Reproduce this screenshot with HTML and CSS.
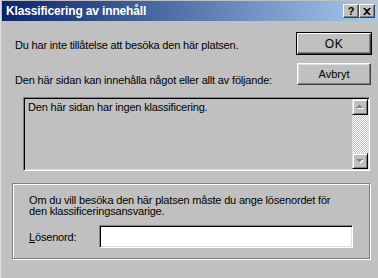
FILE: index.html
```html
<!DOCTYPE html>
<html>
<head>
<meta charset="utf-8">
<title>Klassificering av innehåll</title>
<link rel="stylesheet" href="styles.css">
</head>
<body>
<div class="window">
  <div class="titlebar">
    <span class="title">Klassificering av innehåll</span>
    <div class="caption-buttons">
      <span class="cbtn help">?</span>
      <span class="cbtn close">
        <svg width="8" height="7" viewBox="0 0 8 7"><path d="M0 0h2l2 2 2-2h2L5 3.5 8 7H6L4 5 2 7H0l3-3.5z" fill="#000"/></svg>
      </span>
    </div>
  </div>

  <div class="content">
    <div class="top">
      <div class="messages">
        <p class="msg first">Du har inte tillåtelse att besöka den här platsen.</p>
        <p class="msg second">Den här sidan kan innehålla något eller allt av följande:</p>
      </div>
      <div class="buttons">
        <button class="btn default">OK</button>
        <button class="btn">Avbryt</button>
      </div>
    </div>

    <div class="listbox">
      <div class="list-text">Den här sidan har ingen klassificering.</div>
      <div class="scrollbar">
        <span class="sbtn">
          <svg width="14" height="14" viewBox="0 0 14 14"><path d="M4 9h7L7.5 5.5z" fill="#fff"/><path d="M3 8h7L6.5 4.5z" fill="#808080"/></svg>
        </span>
        <span class="track"></span>
        <span class="sbtn">
          <svg width="14" height="14" viewBox="0 0 14 14"><path d="M4 6h7L7.5 9.5z" fill="#fff"/><path d="M3 5h7L6.5 8.5z" fill="#808080"/></svg>
        </span>
      </div>
    </div>

    <div class="group">
      <p class="group-text">Om du vill besöka den här platsen måste du ange lösenordet för<br>den klassificeringsansvarige.</p>
      <div class="pw-row">
        <label class="pw-label"><u>L</u>ösenord:</label>
        <div class="field"></div>
      </div>
    </div>
  </div>
</div>
</body>
</html>
```

FILE: styles.css
```css
body {
	margin: 0;
	background-color: #c0c0c0;
	font-family: "Liberation Sans", Arial, sans-serif;
	font-size: 11px;
	letter-spacing: -0.18px;
	color: #000;
}

.window {
	width: 378px;
	height: 278px;
	padding: 1px 0 0 1px;
	box-sizing: border-box;
	background-color: #c0c0c0;
	border-left: 1px solid #dfdfdf;
}

.titlebar {
	height: 20px;
	display: flex;
	align-items: center;
	padding-left: 4px;
	padding-right: 3px;
	background: linear-gradient(to right, #0a246a, #a6caf0);
}

.title {
	flex: 1;
	color: #fff;
	font-weight: bold;
	font-size: 12px;
	letter-spacing: -0.15px;
}

.caption-buttons {
	display: flex;
}

.cbtn {
	width: 16px;
	height: 14px;
	box-sizing: border-box;
	display: flex;
	align-items: center;
	justify-content: center;
	background-color: #c0c0c0;
	border: 1px solid;
	border-color: #fff #404040 #404040 #fff;
	box-shadow: inset -1px -1px #808080;
	font-weight: bold;
	font-size: 11px;
	letter-spacing: 0;
}

.content {
	height: 257px;
}

.top {
	display: flex;
	justify-content: space-between;
}

.messages {
	padding-left: 13px;
}

.msg {
	margin: 0;
	line-height: 13px;
	white-space: nowrap;
}

.msg.first {
	margin-top: 18px;
}

.msg.second {
	margin-top: 22px;
}

.buttons {
	display: flex;
	flex-direction: column;
	align-items: flex-end;
	padding-right: 6px;
}

.btn {
	width: 74px;
	height: 22px;
	margin: 0;
	padding: 0;
	box-sizing: border-box;
	background-color: #c0c0c0;
	font-family: "Liberation Sans", Arial, sans-serif;
	font-size: 11px;
	color: #000;
	border: 1px solid;
	border-color: #fff #404040 #404040 #fff;
	box-shadow: inset -1px -1px #808080, inset 1px 1px #dfdfdf;
	margin-right: 1px;
}

.btn.default {
	width: 76px;
	height: 23px;
	margin-top: 11px;
	margin-right: 0;
	border: 1px solid #000;
	box-shadow: inset 1px 1px #fff, inset -1px -1px #404040, inset -2px -2px #808080;
	font-size: 12px;
	letter-spacing: 0.5px;
}

.btn + .btn {
	margin-top: 8px;
}

.listbox {
	display: flex;
	margin: 10px 8px 0 21px;
	height: 74px;
	box-sizing: border-box;
	border: 1px solid;
	border-color: #808080 #fff #fff #808080;
	box-shadow: inset 1px 1px #000, inset -1px -1px #dfdfdf;
	padding: 1px;
}

.list-text {
	flex: 1;
	padding: 2px 3px;
	line-height: 13px;
}

.scrollbar {
	width: 16px;
	display: flex;
	flex-direction: column;
}

.sbtn {
	width: 16px;
	height: 16px;
	box-sizing: border-box;
	background-color: #c0c0c0;
	border: 1px solid;
	border-color: #dfdfdf #000 #000 #dfdfdf;
	box-shadow: inset 1px 1px #fff, inset -1px -1px #808080;
	display: flex;
	align-items: center;
	justify-content: center;
}

.track {
	flex: 1;
	background-image: conic-gradient(#fff 25%, #c0c0c0 0 50%, #fff 0 75%, #c0c0c0 0);
	background-size: 2px 2px;
}

.group {
	margin: 12px 8px 0 10px;
	height: 76px;
	box-sizing: border-box;
	border: 1px solid #808080;
	box-shadow: inset 1px 1px #fff, 1px 1px #fff;
	padding: 11px 16px 0 16px;
}

.group-text {
	margin: 0;
	line-height: 11px;
	white-space: nowrap;
}

.pw-row {
	display: flex;
	align-items: center;
	margin-top: 8px;
}

.pw-label {
	width: 70px;
}

.field {
	width: 255px;
	height: 23px;
	box-sizing: border-box;
	background-color: #fff;
	border: 1px solid;
	border-color: #808080 #fff #fff #808080;
	box-shadow: inset 1px 1px #000, inset -1px -1px #dfdfdf;
}
```
